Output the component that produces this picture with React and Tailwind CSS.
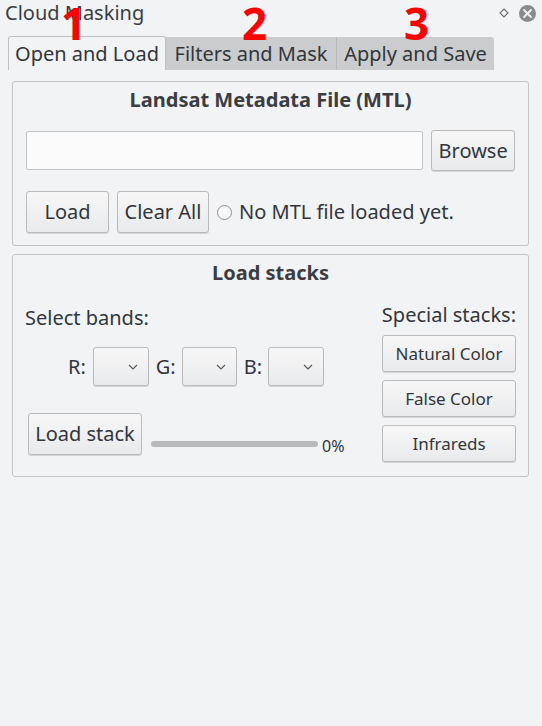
import React from "react";

const font = { fontFamily: '"Noto Sans", "Open Sans", sans-serif' };

function Btn({ children, className = "" }) {
  return (
    <div
      className={
        "flex items-center justify-center rounded-[3px] border border-[#b9babc] bg-gradient-to-b from-[#f7f7f8] to-[#e9eaeb] shadow-[0_1px_0_rgba(0,0,0,0.12)] text-[#31363b] " +
        className
      }
    >
      {children}
    </div>
  );
}

function Combo({ className = "" }) {
  return (
    <div
      className={
        "relative flex items-center justify-end rounded-[3px] border border-[#b9babc] bg-gradient-to-b from-[#f7f7f8] to-[#e9eaeb] shadow-[0_1px_0_rgba(0,0,0,0.12)] pr-[10px] " +
        className
      }
    >
      <svg width="10" height="6" viewBox="0 0 10 6">
        <path d="M1 1 L5 5 L9 1" fill="none" stroke="#555" strokeWidth="1.1" />
      </svg>
    </div>
  );
}

export default function App() {
  return (
    <div
      className="relative w-[542px] h-[726px] bg-[#f2f3f5] text-[#31363b] overflow-hidden"
      style={font}
    >
      {/* title bar */}
      <div className="flex h-[30px] items-center justify-between pl-[5px] pr-[6px]">
        <span className="text-[20px] leading-none text-[#3a3d41] -mt-[4px]">Cloud Masking</span>
        <div className="flex items-center gap-[9px] -mt-[4px]">
          <svg width="12" height="12" viewBox="0 0 12 12">
            <path d="M6 2 L10 6 L6 10 L2 6 Z" fill="none" stroke="#6b6e72" strokeWidth="1.1" />
          </svg>
          <svg width="17" height="17" viewBox="0 0 17 17">
            <circle cx="8.5" cy="8.5" r="8.5" fill="#8a8b8d" />
            <path d="M5 5 L12 12 M12 5 L5 12" stroke="#f2f3f5" strokeWidth="1.8" strokeLinecap="round" />
          </svg>
        </div>
      </div>

      {/* tabs */}
      <div className="flex items-end pl-[8px] mt-[6px] h-[34px]">
        <div className="flex h-[34px] w-[158px] items-center justify-center rounded-t-[3px] border border-b-0 border-[#bfc0c2] bg-[#f2f3f5] text-[20px] text-[#31363b]">
          Open and Load
        </div>
        <div className="flex h-[33px] w-[171px] items-center justify-center bg-[#cbcccd] text-[20px] text-[#31363b] border-r border-[#b7b8ba]">
          Filters and Mask
        </div>
        <div className="flex h-[33px] w-[157px] items-center justify-center rounded-tr-[3px] bg-[#cbcccd] text-[20px] text-[#31363b]">
          Apply and Save
        </div>
      </div>

      {/* pane */}
      <div className="flex flex-col gap-[8px] pl-[12px] pr-[13px] pt-[11px]">
        {/* group 1 */}
        <div className="flex h-[165px] flex-col rounded-[3px] border border-[#c3c4c6] px-[13px]">
          <div className="pt-[4px] text-center text-[20px] leading-[27px] font-bold text-[#3a3d41]">
            Landsat Metadata File (MTL)
          </div>
          <div className="mt-[17px] flex items-center">
            <div className="h-[39px] w-[399px] rounded-[2px] border border-[#c3c4c6] bg-[#fbfbfb]" />
            <Btn className="ml-[8px] h-[41px] w-[84px] text-[20px]">Browse</Btn>
          </div>
          <div className="mt-[20px] flex items-center">
            <Btn className="h-[42px] w-[83px] text-[20px]">Load</Btn>
            <Btn className="ml-[8px] h-[42px] w-[92px] text-[20px]">Clear All</Btn>
            <div className="ml-[8px] h-[15px] w-[15px] rounded-full border border-[#8e9093] bg-[#f7f7f7]" />
            <span className="ml-[7px] text-[20px] text-[#31363b]">No MTL file loaded yet.</span>
          </div>
        </div>

        {/* group 2 */}
        <div className="flex h-[223px] flex-col rounded-[3px] border border-[#c3c4c6] px-[12px]">
          <div className="pt-[4px] text-center text-[20px] leading-[27px] font-bold text-[#3a3d41]">Load stacks</div>
          <div className="mt-[15px] flex justify-between">
            <div className="flex flex-col">
              <div className="mt-[3px] text-[20px] leading-[27px] text-[#31363b]">Select bands:</div>
              <div className="mt-[16px] flex items-center pl-[43px]">
                <span className="text-[20px]">R:</span>
                <Combo className="ml-[7px] h-[39px] w-[56px]" />
                <span className="ml-[7px] text-[20px]">G:</span>
                <Combo className="ml-[6px] h-[39px] w-[55px]" />
                <span className="ml-[7px] text-[20px]">B:</span>
                <Combo className="ml-[6px] h-[39px] w-[56px]" />
              </div>
              <div className="mt-[27px] flex items-start pl-[3px]">
                <Btn className="h-[42px] w-[114px] text-[20px]">Load stack</Btn>
                <div className="ml-[9px] mt-[28px] h-[6px] w-[167px] rounded-full bg-[#b8b9bb]" />
                <span className="ml-[4px] mt-[22px] text-[16px] leading-[23px] text-[#31363b]">0%</span>
              </div>
            </div>
            <div className="flex flex-col items-end">
              <div className="text-[20px] leading-[27px] text-[#31363b]">Special stacks:</div>
              <div className="mt-[7px] flex flex-col gap-[8px]">
                <Btn className="h-[37px] w-[134px] text-[17px]">Natural Color</Btn>
                <Btn className="h-[37px] w-[134px] text-[17px]">False Color</Btn>
                <Btn className="h-[37px] w-[134px] text-[17px]">Infrareds</Btn>
              </div>
            </div>
          </div>
        </div>
      </div>

      {/* red annotation numerals */}
      <span className="absolute left-[61px] top-[1px] text-[44px] font-bold leading-none text-[#ff0000]" style={{ fontFamily: '"Open Sans", sans-serif' }}>1</span>
      <span className="absolute left-[242px] top-[1px] text-[44px] font-bold leading-none text-[#ff0000]" style={{ fontFamily: '"Open Sans", sans-serif' }}>2</span>
      <span className="absolute left-[404px] top-[1px] text-[44px] font-bold leading-none text-[#ff0000]" style={{ fontFamily: '"Open Sans", sans-serif' }}>3</span>
    </div>
  );
}
